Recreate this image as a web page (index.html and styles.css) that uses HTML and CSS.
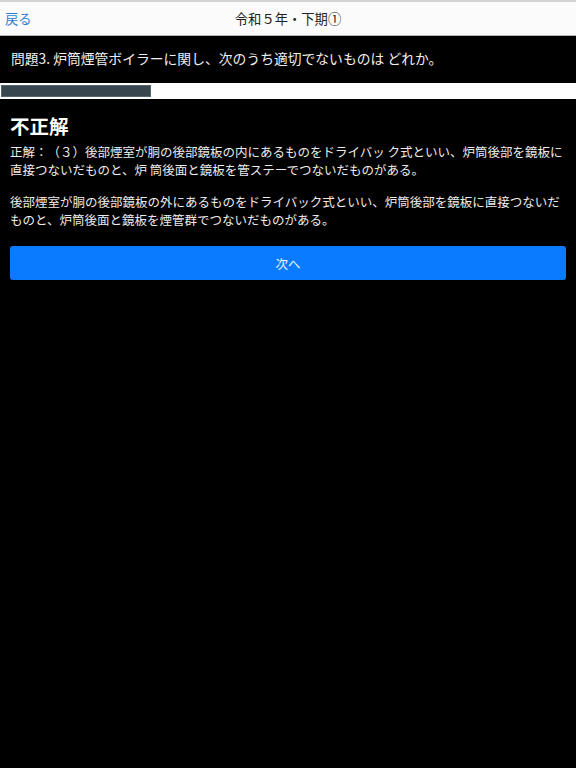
FILE: index.html
```html
<!DOCTYPE html>
<html lang="ja">
<head>
<meta charset="utf-8">
<title>令和５年・下期①</title>
<link rel="stylesheet" href="styles.css">
</head>
<body>
<div class="topline"></div>
<header class="navbar">
  <a class="back" href="#">戻る</a>
  <div class="title">令和５年・下期①</div>
  <div class="spacer"></div>
</header>
<div class="question">問題3. 炉筒煙管ボイラーに関し、次のうち適切でないものは どれか。</div>
<div class="progress"><div class="progress-fill" style="width:150px"></div></div>
<main class="content">
  <h2 class="result">不正解</h2>
  <p class="answer">正解：（３）後部煙室が胴の後部鏡板の内にあるものをドライバッ ク式といい、炉筒後部を鏡板に直接つないだものと、炉 筒後面と鏡板を管ステーでつないだものがある。</p>
  <p class="answer">後部煙室が胴の後部鏡板の外にあるものをドライバック式といい、炉筒後部を鏡板に直接つないだものと、炉筒後面と鏡板を煙管群でつないだものがある。</p>
  <button class="next" type="button">次へ</button>
</main>
</body>
</html>
```

FILE: styles.css
```css
html, body {
  margin: 0;
  padding: 0;
  background: #000;
  font-family: "Noto Sans CJK JP", "Noto Sans", sans-serif;
  text-spacing-trim: space-all;
  height: 100%;
}

.topline {
  height: 2px;
  background: #d4d4d4;
}

.navbar {
  height: 33px;
  background: #fbfbfb;
  border-bottom: 1px solid #b3b3b3;
  display: grid;
  grid-template-columns: 1fr auto 1fr;
  align-items: center;
  font-size: 13.3px;
}

.back {
  color: #2f7bd4;
  text-decoration: none;
  padding-left: 5px;
}

.title {
  color: #222;
}

.question {
  color: #f0f0f0;
  font-size: 13.8px;
  line-height: 20px;
  padding: 12px 11px 15px;
}

.progress {
  height: 12px;
  background: #fff;
  padding: 2px 0 2px 1px;
}

.progress-fill {
  height: 12px;
  box-sizing: border-box;
  background: #38474f;
  border: 1px solid #56646b;
}

.content {
  padding: 0 10px;
}

.result {
  color: #fff;
  font-size: 19.5px;
  font-weight: bold;
  line-height: 24px;
  margin: 15px 0 5px;
}

.answer {
  color: #ececec;
  font-size: 12.5px;
  line-height: 18px;
  margin: 0 0 14px;
}

.next {
  display: block;
  width: 100%;
  height: 34px;
  margin-top: 17px;
  border: none;
  border-radius: 3px;
  background: #0a7bff;
  color: #e8f1ff;
  font-family: inherit;
  font-size: 12.5px;
}
```
